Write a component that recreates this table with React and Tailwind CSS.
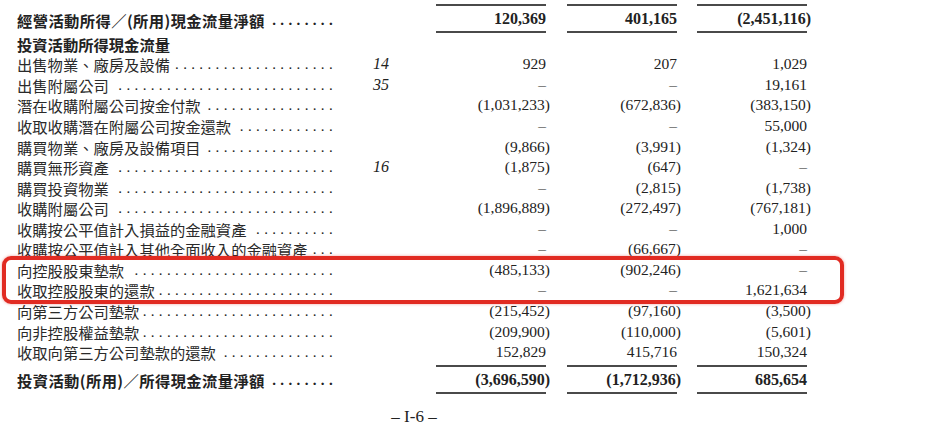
const cjk = "font-['Noto_Sans_CJK_TC','Noto_Sans_CJK_SC',sans-serif]";
const serif = "font-['Liberation_Serif',serif]";

const rows = [
  ["出售物業、廠房及設備", "14", "929", "207", "1,029"],
  ["出售附屬公司", "35", "–", "–", "19,161"],
  ["潛在收購附屬公司按金付款", "", "(1,031,233)", "(672,836)", "(383,150)"],
  ["收取收購潛在附屬公司按金還款", "", "–", "–", "55,000"],
  ["購買物業、廠房及設備項目", "", "(9,866)", "(3,991)", "(1,324)"],
  ["購買無形資產", "16", "(1,875)", "(647)", "–"],
  ["購買投資物業", "", "–", "(2,815)", "(1,738)"],
  ["收購附屬公司", "", "(1,896,889)", "(272,497)", "(767,181)"],
  ["收購按公平值計入損益的金融資產", "", "–", "–", "1,000"],
  ["收購按公平值計入其他全面收入的金融資產", "", "–", "(66,667)", "–"],
  ["向控股股東墊款", "", "(485,133)", "(902,246)", "–"],
  ["收取控股股東的還款", "", "–", "–", "1,621,634"],
  ["向第三方公司墊款", "", "(215,452)", "(97,160)", "(3,500)"],
  ["向非控股權益墊款", "", "(209,900)", "(110,000)", "(5,601)"],
  ["收取向第三方公司墊款的還款", "", "152,829", "415,716", "150,324"],
];

// leader dots sized to the space left after the label
function dots(n) {
  return Array(Math.max(n, 0)).fill(".").join(" ");
}

function Label({ text, bold, count }) {
  const n = count ?? Math.floor((313 - text.length * 15.3 - 3.75) / 8.1) + 1;
  return (
    <div className="w-[316px] ml-[17px] flex items-center justify-between whitespace-nowrap">
      <span className={`${cjk} text-[15.3px] leading-[20px] ${bold ? "font-bold tracking-[0.4px]" : "text-[#2a2a2a]"}`}>{text}</span>
      <span className={`${serif} text-[15px] leading-[20px] whitespace-pre tracking-[0.3px] ${bold ? "font-bold" : ""}`}>{dots(n)}</span>
    </div>
  );
}

function Num({ v, bold, line }) {
  const neg = v.startsWith("(");
  return (
    <div className={`w-[110px] h-full flex items-center justify-end ${line || ""}`}>
      <span className={`${serif} ${bold ? "font-bold text-[16px]" : "text-[15.5px]"} leading-[20px] ${neg ? "mr-[-4px]" : ""}`}>{v}</span>
    </div>
  );
}

function Cells({ vals, bold, line }) {
  return (
    <div className="flex h-full">
      <Num v={vals[0]} bold={bold} line={line} />
      <div className="w-[21px]" />
      <Num v={vals[1]} bold={bold} line={line} />
      <div className="w-[20px]" />
      <Num v={vals[2]} bold={bold} line={line} />
    </div>
  );
}

export default function App() {
  return (
    <div className="relative w-[928px] h-[441px] overflow-hidden bg-white text-[#222]">
      <div className="pt-[4px]">
        <div className="flex h-[2px]">
          <div className="w-[436px]" />
          <Cells vals={["", "", ""]} line="bg-[#4a4a4a]" />
        </div>

        <div className="flex h-[27px]">
          <Label text="經營活動所得／(所用)現金流量淨額" bold count={8} />
          <div className="w-[103px]" />
          <Cells vals={["120,369", "401,165", "(2,451,116)"]} bold line="border-b-2 border-[#4a4a4a]" />
        </div>

        <div className="flex h-[20px] mt-[1px] items-center">
          <span className={`ml-[17px] ${cjk} text-[15.3px] leading-[20px] font-bold`}>投資活動所得現金流量</span>
        </div>

        {rows.map((r) => (
          <div key={r[0]} className="flex h-[20.57px]">
            <Label text={r[0]} />
            <div className={`w-[103px] pl-[40px] flex items-center ${serif} italic text-[16px] leading-[20px]`}>{r[1]}</div>
            <Cells vals={[r[2], r[3], r[4]]} />
          </div>
        ))}

        <div className="flex h-[29px] mt-[3px]">
          <Label text="投資活動(所用)／所得現金流量淨額" bold count={8} />
          <div className="w-[103px]" />
          <Cells vals={["(3,696,590)", "(1,712,936)", "685,654"]} bold line="border-y-2 border-[#4a4a4a]" />
        </div>

        <div className={`w-[828px] mt-[13px] text-center ${serif} text-[17px] leading-[20px]`}>– I-6 –</div>
      </div>

      <div className="absolute left-[2px] top-[256px] w-[842px] h-[48px] border-4 border-[#e12b22] rounded-[9px] shadow-[0_0_3px_rgba(225,43,34,0.45)]" />
    </div>
  );
}
